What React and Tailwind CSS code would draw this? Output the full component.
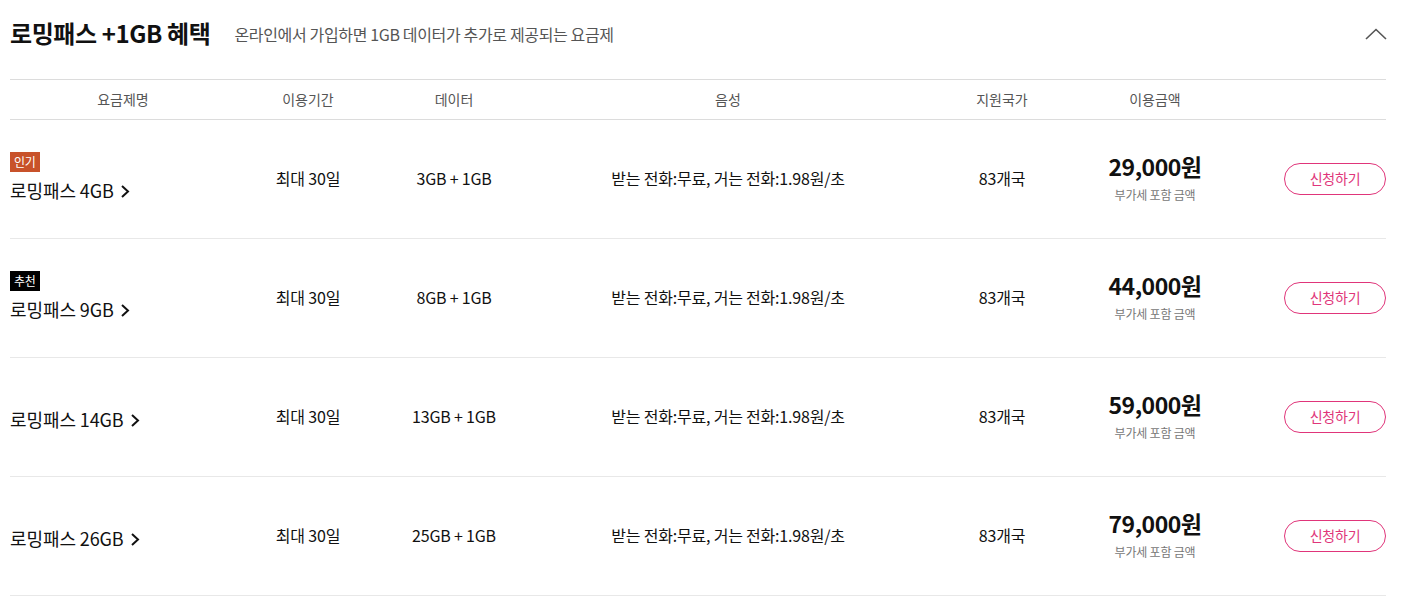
const font = { fontFamily: '"Noto Sans CJK KR", "Noto Sans", sans-serif' };

const PLANS = [
  { name: "로밍패스 4GB", badge: "인기", badgeTone: "bg-[#c8522a]", data: "3GB + 1GB", price: "29,000원" },
  { name: "로밍패스 9GB", badge: "추천", badgeTone: "bg-black", data: "8GB + 1GB", price: "44,000원" },
  { name: "로밍패스 14GB", data: "13GB + 1GB", price: "59,000원" },
  { name: "로밍패스 26GB", data: "25GB + 1GB", price: "79,000원" },
];

const COLS = "grid grid-cols-[226px_144px_148px_400px_148px_158px_1fr] items-center";

function Caret() {
  return (
    <svg width="10" height="13" viewBox="0 0 10 13" className="ml-[6px] mt-[1px]">
      <polyline points="2,1 8,6.5 2,12" fill="none" stroke="#111" strokeWidth="2" />
    </svg>
  );
}

export default function App() {
  return (
    <div className="bg-white w-[1404px] h-[596px] overflow-hidden pl-[10px] pr-[18px] text-[#111]" style={font}>
      <div className="flex items-center h-[66px]">
        <h2 className="text-[24px] font-bold tracking-[-0.4px] text-[#111]">로밍패스 +1GB 혜택</h2>
        <p className="ml-[24px] text-[16px] tracking-[-0.35px] text-[#555] pt-[2px]">온라인에서 가입하면 1GB 데이터가 추가로 제공되는 요금제</p>
        <svg width="22" height="12" viewBox="0 0 22 12" className="ml-auto -mr-[1px] mt-[1px]">
          <polyline points="1,11 11,1.5 21,11" fill="none" stroke="#555" strokeWidth="1.6" />
        </svg>
      </div>

      <div className={`${COLS} mt-[13px] h-[41px] border-t border-b border-[#dcdcdc] text-[14px] text-[#555] text-center`}>
        <div>요금제명</div>
        <div>이용기간</div>
        <div>데이터</div>
        <div>음성</div>
        <div>지원국가</div>
        <div>이용금액</div>
        <div></div>
      </div>

      {PLANS.map((p) => (
        <div key={p.name} className={`${COLS} h-[119px] border-b border-[#e8e8e8] text-[16px] tracking-[-0.2px] text-center`}>
          <div className="text-left flex flex-col items-start">
            {p.badge && (
              <span className={`${p.badgeTone} text-white text-[12px] leading-[20px] px-[4px] mb-[5px] mt-[-2px]`}>{p.badge}</span>
            )}
            <span className={`flex items-center text-[18px] tracking-[-0.1px] ${p.badge ? "" : "mt-[5px]"}`}>
              {p.name}
              <Caret />
            </span>
          </div>
          <div className="mb-[3px]">최대 30일</div>
          <div className="mb-[3px]">{p.data}</div>
          <div className="mb-[3px]">받는 전화:무료, 거는 전화:1.98원/초</div>
          <div className="mb-[3px]">83개국</div>
          <div className="flex flex-col items-center">
            <span className="text-[23px] font-bold tracking-[-0.5px] leading-[30px] mt-[-3px]">{p.price}</span>
            <span className="text-[12px] text-[#777] mt-[5px]">부가세 포함 금액</span>
          </div>
          <div className="flex justify-end mb-[1px]">
            <button className="w-[102px] h-[32px] rounded-full border border-[#e0357a] text-[#e0357a] text-[14px]">신청하기</button>
          </div>
        </div>
      ))}
    </div>
  );
}
